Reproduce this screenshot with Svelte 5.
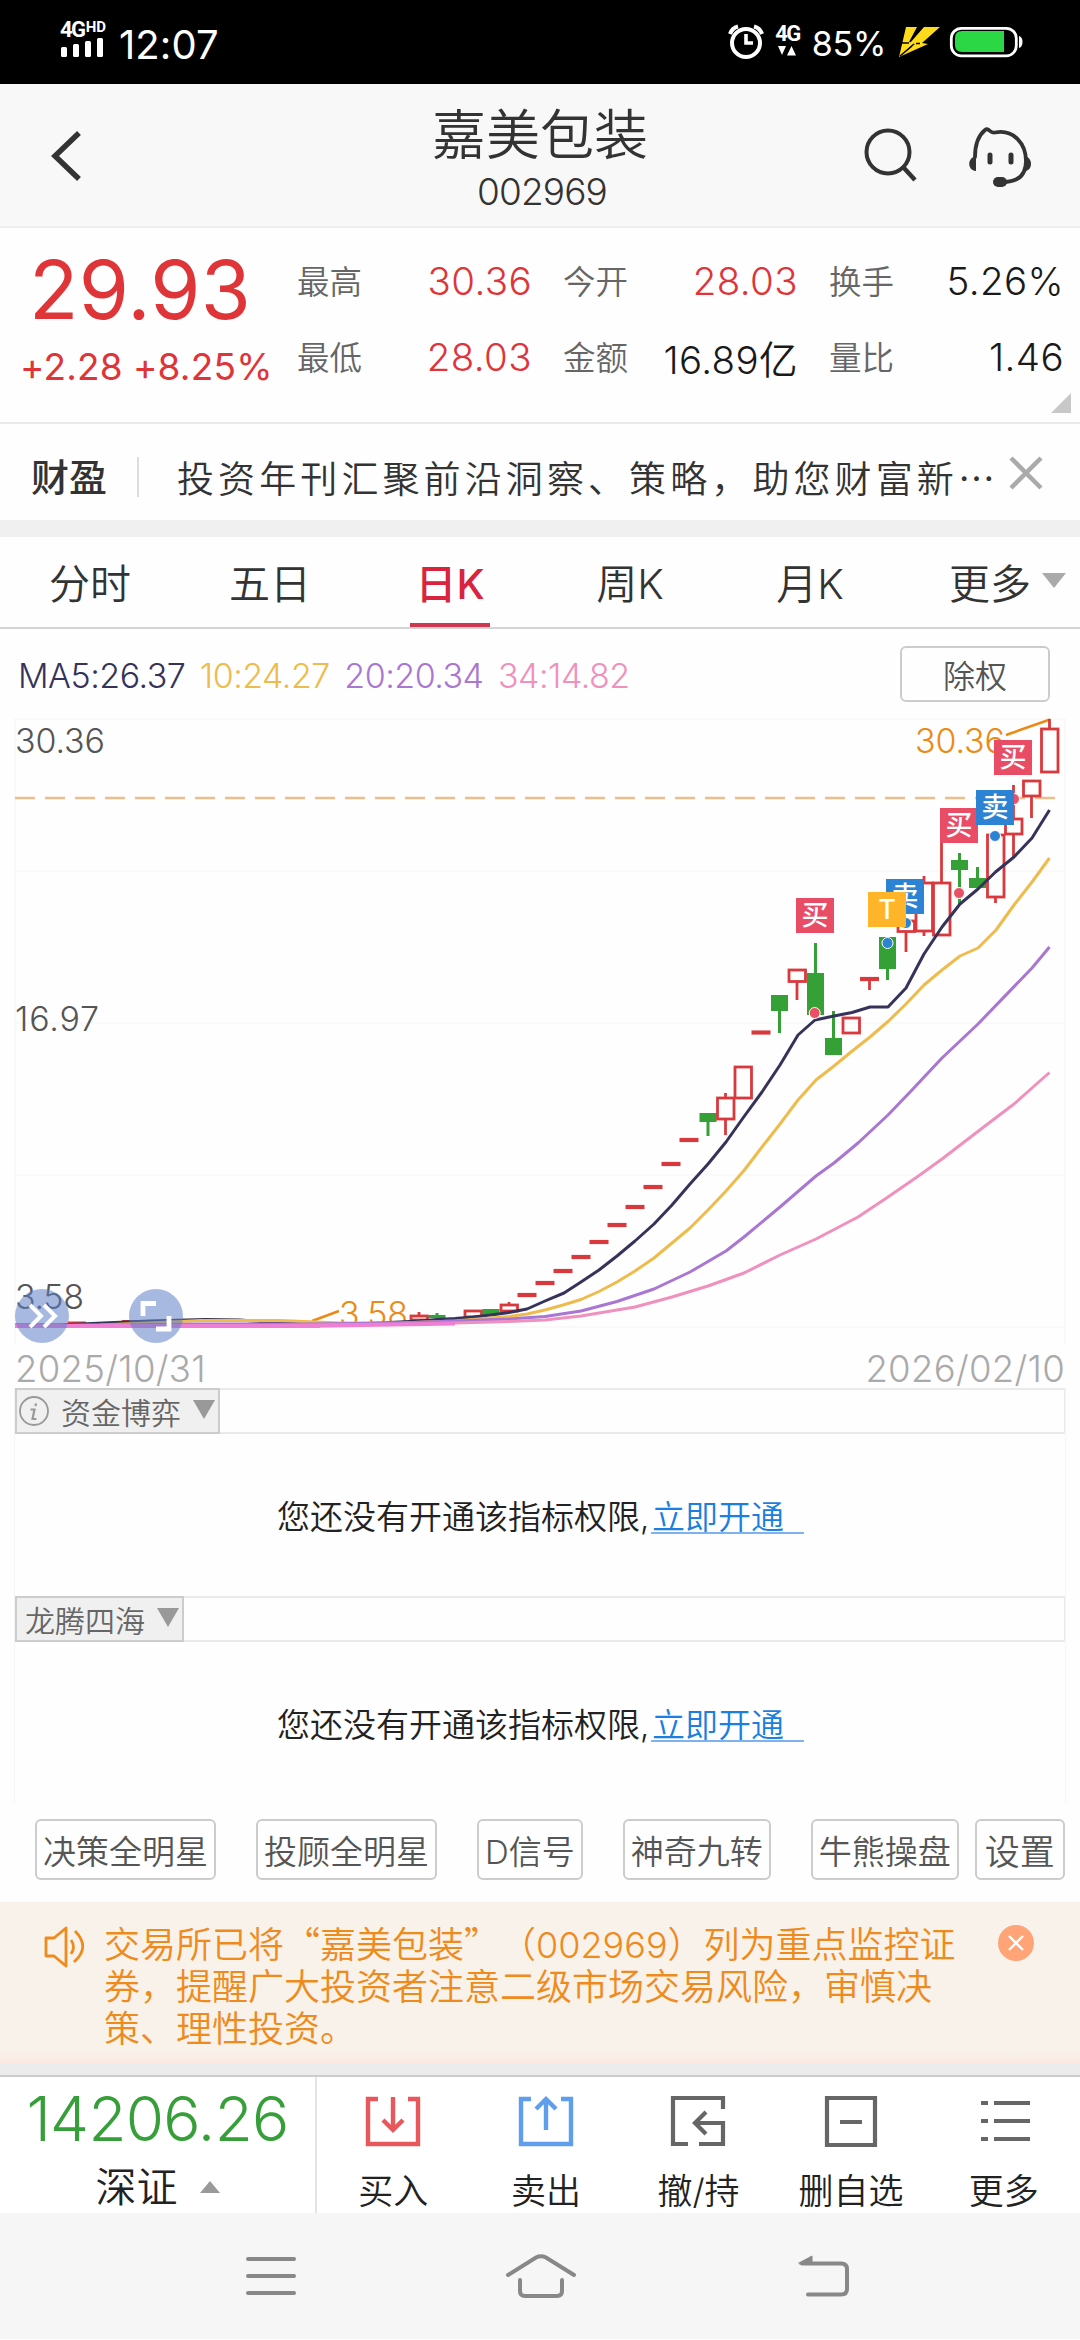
<script lang="ts">
  type Candle = {
    x: number;
    kind: 'up' | 'down' | 'flat';
    top: number;
    bottom: number;
    high?: number;
    low?: number;
  };

  const quotes = [
    { label: '最高', value: '30.36', tone: 'rise' },
    { label: '今开', value: '28.03', tone: 'rise' },
    { label: '换手', value: '5.26%', tone: '' },
    { label: '最低', value: '28.03', tone: 'rise' },
    { label: '金额', value: '16.89亿', tone: '' },
    { label: '量比', value: '1.46', tone: '' },
  ];

  const tabs = ['分时', '五日', '日K', '周K', '月K', '更多'];
  let active = $state('日K');

  const averages = [
    { text: 'MA5:26.37', color: '#35335a' },
    { text: '10:24.27', color: '#efbb4c' },
    { text: '20:20.34', color: '#a976d2' },
    { text: '34:14.82', color: '#f090bd' },
  ];

  const candles: Candle[] = [
    { x: 419, kind: 'up', top: 1315, bottom: 1321, high: 1312 },
    { x: 437, kind: 'down', top: 1315, bottom: 1318, high: 1313 },
    { x: 473, kind: 'up', top: 1310, bottom: 1318 },
    { x: 491, kind: 'down', top: 1309, bottom: 1315 },
    { x: 509, kind: 'up', top: 1304, bottom: 1312, high: 1302 },
    { x: 527, kind: 'flat', top: 1295, bottom: 1295 },
    { x: 545, kind: 'flat', top: 1283, bottom: 1283 },
    { x: 563, kind: 'flat', top: 1271, bottom: 1271 },
    { x: 581, kind: 'flat', top: 1257, bottom: 1257 },
    { x: 599, kind: 'flat', top: 1242, bottom: 1242 },
    { x: 617, kind: 'flat', top: 1225, bottom: 1225 },
    { x: 635, kind: 'flat', top: 1207, bottom: 1207 },
    { x: 653, kind: 'flat', top: 1187, bottom: 1187 },
    { x: 671, kind: 'flat', top: 1164, bottom: 1164 },
    { x: 689, kind: 'flat', top: 1140, bottom: 1140 },
    { x: 708, kind: 'down', top: 1113, bottom: 1122, low: 1136 },
    { x: 725.5, kind: 'up', top: 1097, bottom: 1120, high: 1093, low: 1135 },
    { x: 743, kind: 'up', top: 1066, bottom: 1099 },
    { x: 761, kind: 'flat', top: 1032.5, bottom: 1032.5 },
    { x: 779.5, kind: 'down', top: 995, bottom: 1011, low: 1033 },
    { x: 797, kind: 'up', top: 969, bottom: 982.5, low: 1000 },
    { x: 815.5, kind: 'down', top: 973, bottom: 1015, high: 943 },
    { x: 833.5, kind: 'down', top: 1038, bottom: 1055, high: 1011 },
    { x: 851, kind: 'up', top: 1017, bottom: 1034 },
    { x: 869.5, kind: 'flat', top: 979, bottom: 979, low: 990 },
    { x: 887.5, kind: 'down', top: 937, bottom: 969, low: 980 },
    { x: 906, kind: 'up', top: 920, bottom: 932.5, low: 952 },
    { x: 924, kind: 'up', top: 882, bottom: 932, high: 876, low: 936 },
    { x: 941.5, kind: 'up', top: 882, bottom: 936, high: 842 },
    { x: 959.5, kind: 'down', top: 860, bottom: 870, high: 853, low: 904 },
    { x: 977.5, kind: 'down', top: 878, bottom: 888, high: 867 },
    { x: 995.5, kind: 'up', top: 834, bottom: 898, low: 903 },
    { x: 1013.5, kind: 'up', top: 818, bottom: 835, high: 785, low: 857 },
    { x: 1031.5, kind: 'up', top: 780, bottom: 797, low: 818 },
    { x: 1049.5, kind: 'up', top: 728, bottom: 773, high: 719 },
  ];

  const lines = [
    {
      color: '#35335a',
      points:
        '15,1325 60,1325 103,1323 150,1321 205,1319.5 240,1320 280,1323 330,1325 380,1323 419,1321 437,1319.5 455,1318.5 473,1317 491,1315 509,1312.5 527,1309 545,1301 564,1293 581,1282 599,1270 617,1256 635,1241 654,1224 672,1205 690,1184 708,1164 726,1142 743,1118 762,1092 780,1065 798,1035 815,1020 834,1016 852,1012.5 870,1007 888,1007 906,988 924,954 942,927 960,904 978,889 995.5,872 1014,857 1032,838 1049.5,810',
    },
    {
      color: '#efbb4c',
      points:
        '15,1326 100,1325 170,1322 200,1320.5 280,1320.5 340,1323 400,1323 455,1321 491,1318 509,1316.5 527,1314 545,1310 563,1305 581,1299.5 599,1291.5 617,1282 635,1271 654,1258 672,1243 690,1228 708,1210 726,1191 744,1170.5 762,1147 780,1124 798,1100 816,1080 834,1066 851,1052 870,1037 888,1021.5 906,1004 924,985 942,970 960,956 978,948 996,930 1014,905 1032,882 1049.5,858',
    },
    {
      color: '#a976d2',
      points:
        '15,1326 200,1324 300,1324 400,1323 455,1321 509,1319 545,1316.5 581,1311 617,1301.5 654,1289 690,1272 726,1251 744,1237 780,1207 816,1176 834,1163 858,1143 888,1115 912,1090 942,1058 978,1024 1032,968 1049.5,947',
    },
    {
      color: '#f090bd',
      points:
        '15,1326 200,1326 400,1324.5 455,1323 509,1321.5 545,1320 581,1316 617,1310 635,1307 672,1297 708,1286 744,1273 780,1255 816,1239 858,1217 888,1197 917,1177 942,1159 985,1126 1014,1104 1032,1088 1049.5,1072.5',
    },
  ];

  const dots = [
    { x: 814.7, y: 1013, color: '#ea5067' },
    { x: 887.5, y: 943, color: '#2e82d2' },
    { x: 906, y: 923, color: '#2e82d2' },
    { x: 959, y: 893, color: '#ea5067' },
    { x: 995, y: 836, color: '#2e82d2' },
    { x: 1014, y: 799, color: '#ea5067' },
  ];

  const trades = [
    { x: 796, y: 898, text: '买', color: '#e94d65' },
    { x: 886, y: 879, text: '卖', color: '#2d83d3' },
    { x: 868, y: 892, text: 'T', color: '#ffb429' },
    { x: 940, y: 808, text: '买', color: '#e94d65' },
    { x: 976, y: 790, text: '卖', color: '#2d83d3' },
    { x: 994, y: 740, text: '买', color: '#e94d65' },
  ];

  const indicators = [
    { name: '资金博弈', info: true },
    { name: '龙腾四海', info: false },
  ];

  const signals = ['决策全明星', '投顾全明星', 'D信号', '神奇九转', '牛熊操盘'];
</script>

<div class="screen">
  <div class="status">
    <div class="carrier">
      <div class="net"><b>4G</b><i>HD</i></div>
      <svg width="46" height="20" viewBox="0 0 46 20" fill="#fff">
        <rect x="1" y="9" width="6" height="10" rx="1.5" />
        <rect x="13" y="6" width="6" height="13" rx="1.5" />
        <rect x="25" y="3" width="6" height="16" rx="1.5" />
        <rect x="37" y="0" width="6" height="19" rx="1.5" />
      </svg>
    </div>
    <span class="clock">12:07</span>
    <div class="grow"></div>
    <svg width="36" height="36" viewBox="0 0 36 36" fill="none" stroke="#fff">
      <circle cx="18" cy="19" r="14" stroke-width="4" />
      <path d="M18 10V19H25" stroke-width="3.6" />
      <path d="M2 10Q4 4 10 2.500M34 10Q32 4 26 2.500" stroke-width="4" />
    </svg>
    <div class="data">
      <b>4G</b>
      <svg width="18" height="10" viewBox="0 0 18 10" fill="#fff"><path d="M0 0H8L4 9ZM9 9.500H18L13.500 0Z" /></svg>
    </div>
    <span class="percent">85%</span>
    <svg class="bolt" width="42" height="32" viewBox="0 0 42 32" fill="#ffdb1c">
      <path d="M8 1H19L11 16L16 17L1 31L5 14Z M26 1H42L24 17L30 18L1 31L17 18L12 17Z" />
      <path d="M3 17H11M18 17.500H22M2 30L14 20" stroke="#000" stroke-width="1.500" />
    </svg>
    <svg class="battery" width="74" height="32" viewBox="0 0 74 32">
      <rect x="2.300" y="2.300" width="65" height="27.500" rx="10" fill="none" stroke="#fff" stroke-width="2.800" />
      <path d="M13 5H55V26H13Q6 26 6 19V12Q6 5 13 5Z" fill="#2bd745" />
      <path d="M70 10Q73.500 11 73.500 16Q73.500 21 70 22Z" fill="#fff" />
    </svg>
  </div>

  <header>
    <svg class="back" width="36" height="56" viewBox="0 0 36 56" fill="none" stroke="#333" stroke-width="5.500">
      <path d="M31 5L7 28L31 51" />
    </svg>
    <div class="title">
      <h1>嘉美包装</h1>
      <span>002969</span>
    </div>
    <div class="tools">
      <svg width="56" height="56" viewBox="0 0 56 56" fill="none" stroke="#333" stroke-width="4">
        <circle cx="25" cy="25" r="21.500" />
        <path d="M41 41L52 53" stroke-width="4.500" />
      </svg>
      <svg width="66" height="60" viewBox="0 0 66 60" fill="none" stroke="#333" stroke-width="3.800" stroke-linecap="round">
        <path d="M8 30C8 17 12 8 18 3Q20 1 23 4Q25 6 28 5.500C47 2 59 17 59 34C59 48 51 55 36 55" />
        <path d="M23 28V35M44 28V35" stroke-width="5" />
        <path d="M9 29V44C0 43 0 31 9 29ZM58 29C66 31 66 43 58 44Z" fill="#333" stroke="none" />
        <rect x="26" y="50" width="14" height="10" rx="5" fill="#333" stroke="none" />
      </svg>
    </div>
  </header>

  <section class="quote">
    <div class="price">
      <strong>29.93</strong>
      <div class="change"><span>+2.28</span><span>+8.25%</span></div>
    </div>
    <div class="stats">
      {#each quotes as q}
        <div class="stat">
          <span class="label">{q.label}</span>
          <span class="value {q.tone}">{q.value}</span>
        </div>
      {/each}
    </div>
    <span class="corner"></span>
  </section>

  <section class="news">
    <b>财盈</b>
    <span class="headline">投资年刊汇聚前沿洞察、策略，助您财富新⋯</span>
    <svg width="34" height="34" viewBox="0 0 34 34" stroke="#aaa" stroke-width="4.500">
      <path d="M2 2L32 32M32 2L2 32" />
    </svg>
  </section>

  <nav class="tabs">
    {#each tabs as tab}
      <button class:active={tab === active} onclick={() => (active = tab)}><span>{tab}</span></button>
    {/each}
    <i class="caret"></i>
  </nav>

  <div class="averages">
    {#each averages as ma}
      <span style:color={ma.color}>{ma.text}</span>
    {/each}
    <button>除权</button>
  </div>

  <svg class="chart" width="1080" height="641" viewBox="0 704 1080 641">
    <g stroke="#f7f7f7" stroke-width="1.500">
      {#each [719, 871, 1023, 1175, 1327] as y}
        <path d="M15 {y}H1065" />
      {/each}
      <path d="M15 719V1345M1065 719V1345" />
    </g>
    <path d="M15 798H1055" stroke="#eebd8b" stroke-width="2.400" stroke-dasharray="20 10" />

    <g class="scale">
      <text x="15" y="752.500" textLength="90">30.36</text>
      <text x="15" y="1030.500" textLength="84">16.97</text>
      <text x="15" y="1309" textLength="69">3.58</text>
    </g>
    <g class="extreme">
      <text x="915" y="752.500" textLength="90">30.36</text>
      <text x="339" y="1326" textLength="69">3.58</text>
      <path d="M1006 735L1050 719.500M312 1321L339 1311" />
    </g>

    <path d="M15 1327H24M68 1322.500H86M122 1321H195M285 1326.500H320" stroke="#d9393d" stroke-width="2" />
    {#each candles as c}
      {#if c.kind === 'flat'}
        <path class="up flat" d="M{c.x - 9.5} {c.top}H{c.x + 9.5}" />
        {#if c.low}<path class="up" d="M{c.x} {c.top}V{c.low}" />{/if}
      {:else}
        {#if c.high}<path class={c.kind} d="M{c.x} {c.high}V{c.top + 1}" />{/if}
        {#if c.low}<path class={c.kind} d="M{c.x} {c.bottom - 1}V{c.low}" />{/if}
        {#if c.kind === 'up'}
          <rect class="up" x={c.x - 8} y={c.top + 1} width="16.500" height={c.bottom - c.top - 2} />
        {:else}
          <rect x={c.x - 8.5} y={c.top} width="17" height={c.bottom - c.top} fill="#35a035" />
        {/if}
      {/if}
    {/each}

    {#each lines as line}
      <polyline points={line.points} fill="none" stroke={line.color} stroke-width="3" stroke-linejoin="round" />
    {/each}
    <path d="M15 1326H300L455 1323.500" fill="none" stroke="#ee7fd4" stroke-width="4" />

    {#each dots as d}
      <circle cx={d.x} cy={d.y} r="5.500" fill={d.color} stroke="#fff" stroke-width="1" />
    {/each}
    {#each trades as t}
      <rect x={t.x} y={t.y} width="38" height="35" fill={t.color} />
      <text class="trade" x={t.x + 19} y={t.y + 27}>{t.text}</text>
    {/each}

    <g fill="#6180c8" fill-opacity="0.55">
      <circle cx="42" cy="1316" r="27" />
      <circle cx="156" cy="1316" r="27" />
    </g>
    <g fill="none" stroke="#fff" stroke-width="4">
      <path d="M30 1305L41 1316L30 1327M44 1305L55 1316L44 1327" />
      <path d="M143 1316V1303.500H156M156 1329H169V1316" stroke-width="4.800" />
    </g>
  </svg>

  <div class="dates"><span>2025/10/31</span><span>2026/02/10</span></div>

  {#each indicators as ind}
    <section class="indicator">
      <div class="bar">
        <div class="picker" class:plain={!ind.info}>
          {#if ind.info}
            <svg width="32" height="32" viewBox="0 0 32 32" fill="none" stroke="#999" stroke-width="1.800">
              <circle cx="16" cy="16" r="14" />
              <path d="M18 8.500L17.500 11M12.500 14.500H16.500L14.500 24H18.500" stroke-width="2.200" />
            </svg>
          {/if}
          <span>{ind.name}</span>
          <i class="drop"></i>
        </div>
      </div>
      <p>您还没有开通该指标权限<span class="comma">,</span><a href="#open">立即开通</a></p>
    </section>
  {/each}

  <div class="signals">
    {#each signals as s}
      <button>{s}</button>
    {/each}
    <button class="settings">设置</button>
  </div>

  <section class="notice">
    <svg class="horn" width="42" height="44" viewBox="0 0 42 44" fill="none" stroke="#ef8a1c" stroke-width="2.800" stroke-linejoin="round">
      <path d="M2 13V31H10L22 41V3L10 13Z" />
      <path d="M27 15Q32 22 27 29M31 6Q47 22 30 37" />
    </svg>
    <p>交易所已将“嘉美包装”（<span>002969</span>）列为重点监控证券，提醒广大投资者注意二级市场交易风险，审慎决策、理性投资。</p>
    <svg class="dismiss" width="36" height="36" viewBox="0 0 36 36">
      <circle cx="18" cy="18" r="18" fill="#ffa477" />
      <path d="M11 11L25 25M25 11L11 25" stroke="#fff" stroke-width="2.400" />
    </svg>
  </section>

  <footer>
    <div class="index">
      <strong>14206.26</strong>
      <div><span>深证</span><i></i></div>
    </div>
    <div class="action">
      <svg width="60" height="56" viewBox="0 0 60 56" fill="none" stroke="#e8575b" stroke-width="4.400">
        <path d="M15 5H5V50H55V5H45M30 3V36M20 26L30 36L40 26" />
      </svg>
      <span>买入</span>
    </div>
    <div class="action">
      <svg width="60" height="56" viewBox="0 0 60 56" fill="none" stroke="#5f9eec" stroke-width="4.400">
        <path d="M15 5H5V50H55V5H45M30 36V5M20 15L30 5L40 15" />
      </svg>
      <span>卖出</span>
    </div>
    <div class="action">
      <svg width="60" height="56" viewBox="0 0 60 56" fill="none" stroke="#666" stroke-width="4.200">
        <path d="M20 50H5V4H55V15M31 50H55V29H27M38 18L27 29L38 40" />
      </svg>
      <span>撤/持</span>
    </div>
    <div class="action">
      <svg width="60" height="56" viewBox="0 0 60 56" fill="none" stroke="#666" stroke-width="4.200">
        <path d="M6 4H54V51H6ZM19 28H41" />
      </svg>
      <span>删自选</span>
    </div>
    <div class="action">
      <svg width="60" height="56" viewBox="0 0 60 56" fill="none" stroke="#666" stroke-width="4">
        <path d="M7 9H14M20 9H56M7 27H14M20 27H56M7 45H14M20 45H56" />
      </svg>
      <span>更多</span>
    </div>
  </footer>

  <div class="system">
    <svg width="52" height="42" viewBox="0 0 52 42" stroke="#888" stroke-width="4" stroke-linecap="round">
      <path d="M3 4H49M3 21H49M3 38H49" />
    </svg>
    <svg width="72" height="46" viewBox="0 0 72 46" fill="none" stroke="#888" stroke-width="4" stroke-linecap="round">
      <path d="M3 22L31 4.500Q36 2 41 4.500L69 22M15 27V38Q15 43 20 43H52Q57 43 57 38V27" />
    </svg>
    <svg width="54" height="44" viewBox="0 0 54 44" fill="none" stroke="#888" stroke-width="4" stroke-linecap="round">
      <path d="M5 9.500H44Q50 9.500 50 15V35Q50 40.500 44 40.500H11" />
      <path d="M2 9L15 2V10H3Z" fill="#888" stroke-width="1" />
    </svg>
  </div>
</div>

<style>
  :global(body) {
    background: #fff;
  }

  .screen {
    width: 1080px;
    height: 2340px;
    overflow: hidden;
    display: flex;
    flex-direction: column;
    background: #fefefe;
    color: #333;
    font-family: Inter, 'Noto Sans CJK SC', sans-serif;
    font-weight: 350;
  }

  .screen > * {
    box-sizing: border-box;
    flex-shrink: 0;
  }

  svg {
    display: block;
    flex-shrink: 0;
  }

  button {
    font: inherit;
    color: inherit;
    background: none;
    border: 0;
    padding: 0;
    white-space: nowrap;
  }

  .status {
    height: 84px;
    display: flex;
    align-items: center;
    background: #000;
    color: #fff;
    padding: 0 57px 0 60px;
  }

  .carrier {
    width: 46px;
    margin-top: -6px;
  }

  .net {
    display: flex;
    align-items: flex-start;
    height: 17px;
    line-height: 18px;
  }

  .net b,
  .data b {
    font: 700 22px/18px Roboto, sans-serif;
    letter-spacing: -1.5px;
  }

  .net i {
    font: 700 15px/12px Roboto, sans-serif;
    margin-left: 1px;
  }

  .clock {
    font-size: 40px;
    font-weight: 400;
    margin-left: 13px;
    letter-spacing: 0.1px;
    margin-top: 4px;
  }

  .grow {
    flex: 1;
  }

  .data {
    display: flex;
    flex-direction: column;
    align-items: center;
    gap: 3px;
    margin: -3px 12px 0 11px;
  }

  .percent {
    font-size: 34px;
    font-weight: 400;
    margin-top: 2px;
    letter-spacing: -0.3px;
  }

  .bolt {
    margin: 0 9px 0 12px;
  }

  header {
    height: 144px;
    display: grid;
    grid-template-columns: 1fr 400px 1fr;
    align-items: center;
    background: #f8f8f8;
    border-bottom: 2px solid #eee;
  }

  .back {
    margin: 2px 0 0 48px;
  }

  .title {
    text-align: center;
  }

  h1 {
    margin: 8px 0 0;
    font-size: 54px;
    line-height: 70px;
    font-weight: 350;
  }

  .title span {
    display: block;
    font-size: 37px;
    line-height: 40px;
    letter-spacing: -0.9px;
    margin: 1px 0 6px 4px;
  }

  .tools {
    display: flex;
    justify-content: flex-end;
    gap: 48px;
    margin: 3px 47px 0 0;
  }

  .quote {
    position: relative;
    height: 196px;
    display: flex;
    border-bottom: 2px solid #eaeaea;
  }

  .price {
    width: 297px;
    color: #df3438;
  }

  .price strong {
    display: block;
    margin: 17px 0 0 29px;
    font-size: 81px;
    line-height: 90px;
    font-weight: 400;
    letter-spacing: 0.3px;
  }

  .change {
    display: flex;
    gap: 10px;
    margin: 10px 0 0 20px;
    font-size: 37px;
    line-height: 44px;
    font-weight: 400;
    letter-spacing: 0.2px;
  }

  .stats {
    display: grid;
    grid-template-columns: 235px 235px 235px;
    grid-auto-rows: 76px;
    column-gap: 31px;
    padding-top: 15px;
  }

  .stat {
    display: flex;
    justify-content: space-between;
    align-items: center;
    white-space: nowrap;
  }

  .label {
    font-size: 32.5px;
    color: #666;
    margin-top: -3px;
  }

  .value {
    font-size: 38.5px;
    letter-spacing: 0.4px;
    color: #1a1a1a;
  }

  .value.rise {
    color: #df3438;
  }

  .corner {
    position: absolute;
    right: 9px;
    bottom: 9px;
    border-left: 20px solid transparent;
    border-bottom: 20px solid #c8c8c8;
  }

  .news {
    height: 96px;
    display: flex;
    align-items: center;
    padding: 10px 37px 0 31px;
    font-size: 37px;
  }

  .news b {
    width: 106px;
    font-size: 38px;
    font-weight: 500;
    border-right: 2px solid #ddd;
    line-height: 40px;
  }

  .headline {
    flex: 1;
    margin-left: 38px;
    letter-spacing: 4.1px;
    white-space: nowrap;
    font-family: 'Noto Sans CJK SC', sans-serif;
  }

  .news svg {
    margin-top: -8px;
  }

  .tabs {
    position: relative;
    height: 109px;
    display: grid;
    grid-template-columns: repeat(6, 180px);
    border-top: 17px solid #f0f0f0;
    border-bottom: 2px solid #d4d4d4;
    font-size: 41px;
  }

  .tabs button {
    display: flex;
    justify-content: center;
  }

  .tabs span {
    box-sizing: border-box;
    height: 90px;
    line-height: 94px;
    padding: 0 5px;
  }

  .tabs .active span {
    color: #d9243f;
    font-weight: 500;
    border-bottom: 4px solid #cf3650;
  }

  .caret {
    position: absolute;
    right: 14px;
    top: 36px;
    border: 12px solid transparent;
    border-bottom: 0;
    border-top: 15px solid #aaa;
  }

  .averages {
    height: 75px;
    display: flex;
    align-items: center;
    gap: 14.5px;
    padding: 18px 30px 0 18px;
    font-size: 34px;
    letter-spacing: -0.5px;
  }

  .averages button {
    box-sizing: border-box;
    width: 150px;
    height: 56px;
    margin-left: auto;
    margin-top: -3px;
    border: 2px solid #ccc;
    border-radius: 6px;
    font-size: 32px;
    color: #555;
  }

  .chart text {
    font-size: 34px;
  }

  .scale {
    fill: #555;
  }

  .extreme {
    fill: #ec8a16;
  }

  .extreme path {
    stroke: #ec8a16;
    stroke-width: 2.6;
  }

  .up {
    fill: none;
    stroke: #d9393d;
    stroke-width: 2.8;
  }

  .flat {
    stroke-width: 4.2;
  }

  .down {
    stroke: #35a035;
    stroke-width: 3;
  }

  .chart .trade {
    fill: #fff;
    font-size: 27px;
    font-weight: 500;
    text-anchor: middle;
  }

  .dates {
    height: 43px;
    display: flex;
    justify-content: space-between;
    padding: 0 15px;
    font-size: 36.5px;
    line-height: 49px;
    letter-spacing: 0.3px;
    color: #aaa;
  }

  .indicator {
    height: 208px;
    margin: 0 14px;
    border: solid #f5f5f5;
    border-width: 0 1px;
  }

  .bar {
    box-sizing: border-box;
    height: 46px;
    display: flex;
    border: 2px solid #eaeaea;
    border-right-width: 1px;
  }

  .picker {
    display: flex;
    align-items: center;
    box-sizing: border-box;
    width: 205px;
    height: 46px;
    margin: -2px;
    padding-left: 1px;
    border: 2px solid #ccc;
    background: #f0f0f0;
    color: #666;
    font-size: 30px;
  }

  .picker span {
    margin: 0 12px 0 11px;
  }

  .picker.plain {
    width: 169px;
  }

  .picker.plain span {
    margin-left: 7px;
  }

  .drop {
    border: 11px solid transparent;
    border-bottom: 0;
    border-top: 19px solid #999;
    margin-top: -3px;
  }

  .indicator p {
    margin: 59px 0 0 262px;
    font-size: 33px;
    line-height: 48px;
    color: #222;
    display: flex;
  }

  .comma {
    width: 11px;
  }

  .indicator a {
    box-sizing: border-box;
    width: 153px;
    height: 41px;
    padding-left: 1px;
    color: #1a7fe0;
    text-decoration: none;
    border-bottom: 2px solid #7fb0f0;
  }

  .signals {
    height: 98px;
    display: flex;
    gap: 40px;
    padding: 15px 15px 0 35px;
    font-size: 33px;
    color: #555;
  }

  .signals button {
    box-sizing: border-box;
    height: 61px;
    padding: 0 6px;
    border: 2px solid #ccc;
    border-radius: 6px;
  }

  .signals .settings {
    width: 90px;
    margin-left: -24px;
    font-size: 35px;
    padding: 0;
  }

  .notice {
    height: 173px;
    display: flex;
    align-items: flex-start;
    background: linear-gradient(#f8f2ea 150px, #fce8e3 161px, #ececec 161px);
    padding: 19px 0 0 44px;
  }

  .horn {
    margin-top: 4px;
  }

  .notice p {
    width: 870px;
    margin: 0 0 0 18px;
    font-family: 'Noto Sans CJK SC', sans-serif;
    font-size: 36px;
    line-height: 42px;
    color: #ef8a1c;
    text-spacing-trim: space-all;
  }

  .notice p span {
    font-family: Inter, sans-serif;
    line-height: 0;
  }

  .dismiss {
    margin: 4px 0 0 24px;
  }

  footer {
    height: 138px;
    display: flex;
    border-top: 2px solid #ccc;
    background: #fff;
    color: #222;
  }

  .index {
    box-sizing: border-box;
    width: 317px;
    border-right: 2px solid #e4e4e4;
    text-align: center;
  }

  .index strong {
    display: block;
    margin-top: 10px;
    font-size: 62px;
    line-height: 64px;
    font-weight: 350;
    letter-spacing: -0.7px;
    color: #369f39;
  }

  .index div {
    display: flex;
    align-items: center;
    justify-content: center;
    gap: 22px;
    margin-top: 8px;
    font-size: 41px;
    line-height: 56px;
  }

  .index i {
    border: 10px solid transparent;
    border-top: 0;
    border-bottom: 12px solid #999;
  }

  .action {
    flex: 1;
    display: flex;
    flex-direction: column;
    align-items: center;
    font-size: 35px;
    line-height: 50px;
  }

  .action svg {
    margin: 17px 0 16px;
  }

  .system {
    height: 126px;
    display: flex;
    justify-content: space-between;
    align-items: center;
    background: #f6f6f6;
    padding: 0 229px 0 245px;
  }

  .system svg:nth-child(2) {
    margin-right: 12px;
  }
</style>
